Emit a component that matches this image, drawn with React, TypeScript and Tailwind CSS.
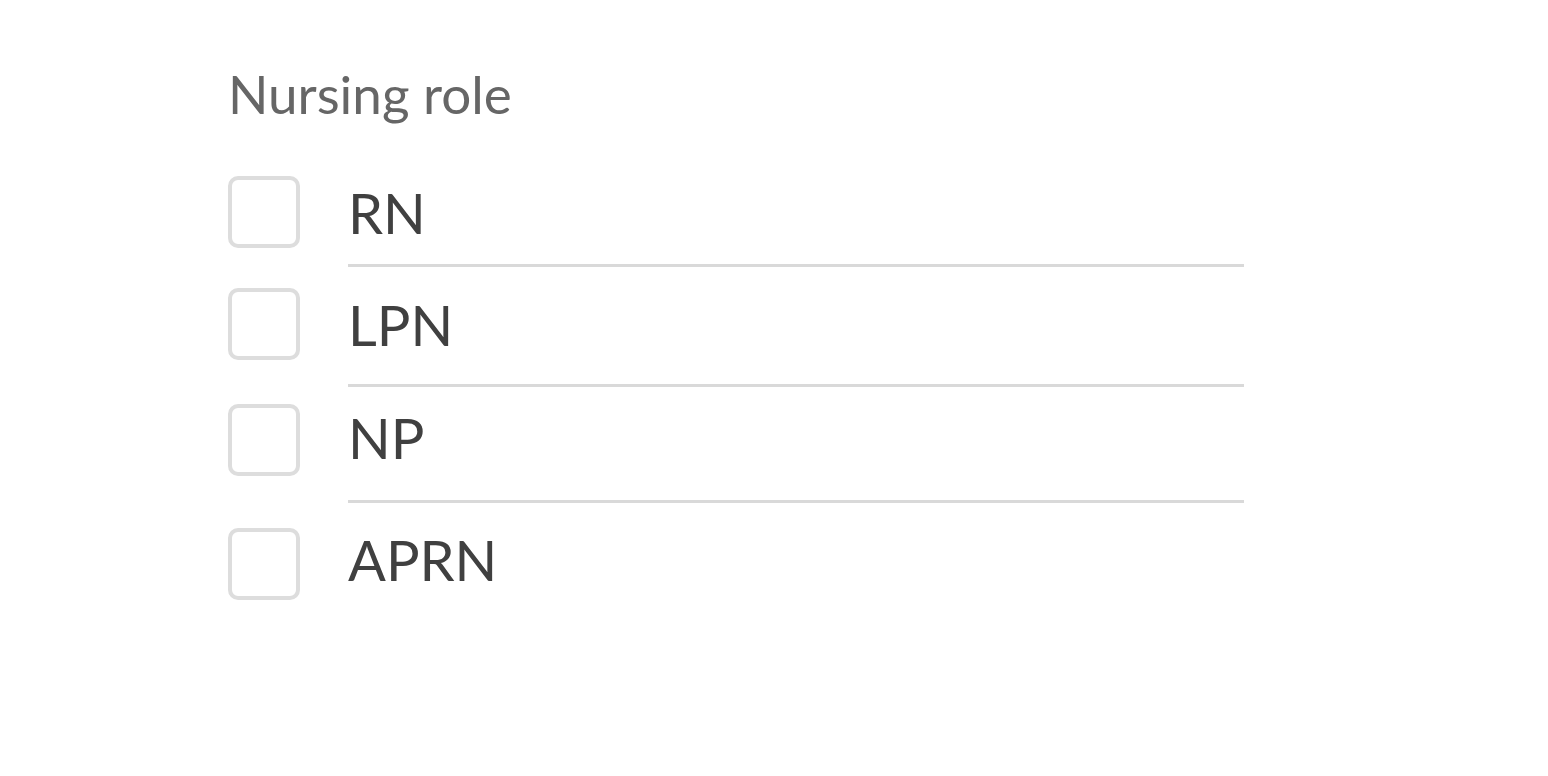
import React from 'react';

const roles = [
  { label: 'RN', text: 'pt-[9px]', col: 'h-[91px] border-b-[3px]', gap: 'mb-[21px]' },
  { label: 'LPN', text: 'pt-[9px]', col: 'h-[99px] border-b-[3px]', gap: 'mb-[17px]' },
  { label: 'NP', text: 'pt-[6px]', col: 'h-[99px] border-b-[3px]', gap: 'mb-[25px]' },
  { label: 'APRN', text: 'pt-[4px]', col: 'h-[72px]', gap: '' },
];

export default function App() {
  return (
    <div className="min-h-screen bg-white pl-[228px] pt-[67px]" style={{ fontFamily: 'Lato, "Open Sans", sans-serif' }}>
      <h2 className="text-[53px] leading-[53px] text-[#666666] font-normal">Nursing role</h2>

      <div className="mt-[56px]">
        {roles.map((r) => (
          <label key={r.label} className={`flex items-start cursor-pointer ${r.gap}`}>
            <span className="w-[72px] h-[72px] shrink-0 border-[4px] border-[#dddddd] rounded-[10px] bg-white" />
            <span className={`ml-[48px] w-[896px] border-[#d9d9d9] ${r.col}`}>
              <span className={`block text-[56px] leading-[56px] text-[#404040] ${r.text}`}>{r.label}</span>
            </span>
          </label>
        ))}
      </div>
    </div>
  );
}
